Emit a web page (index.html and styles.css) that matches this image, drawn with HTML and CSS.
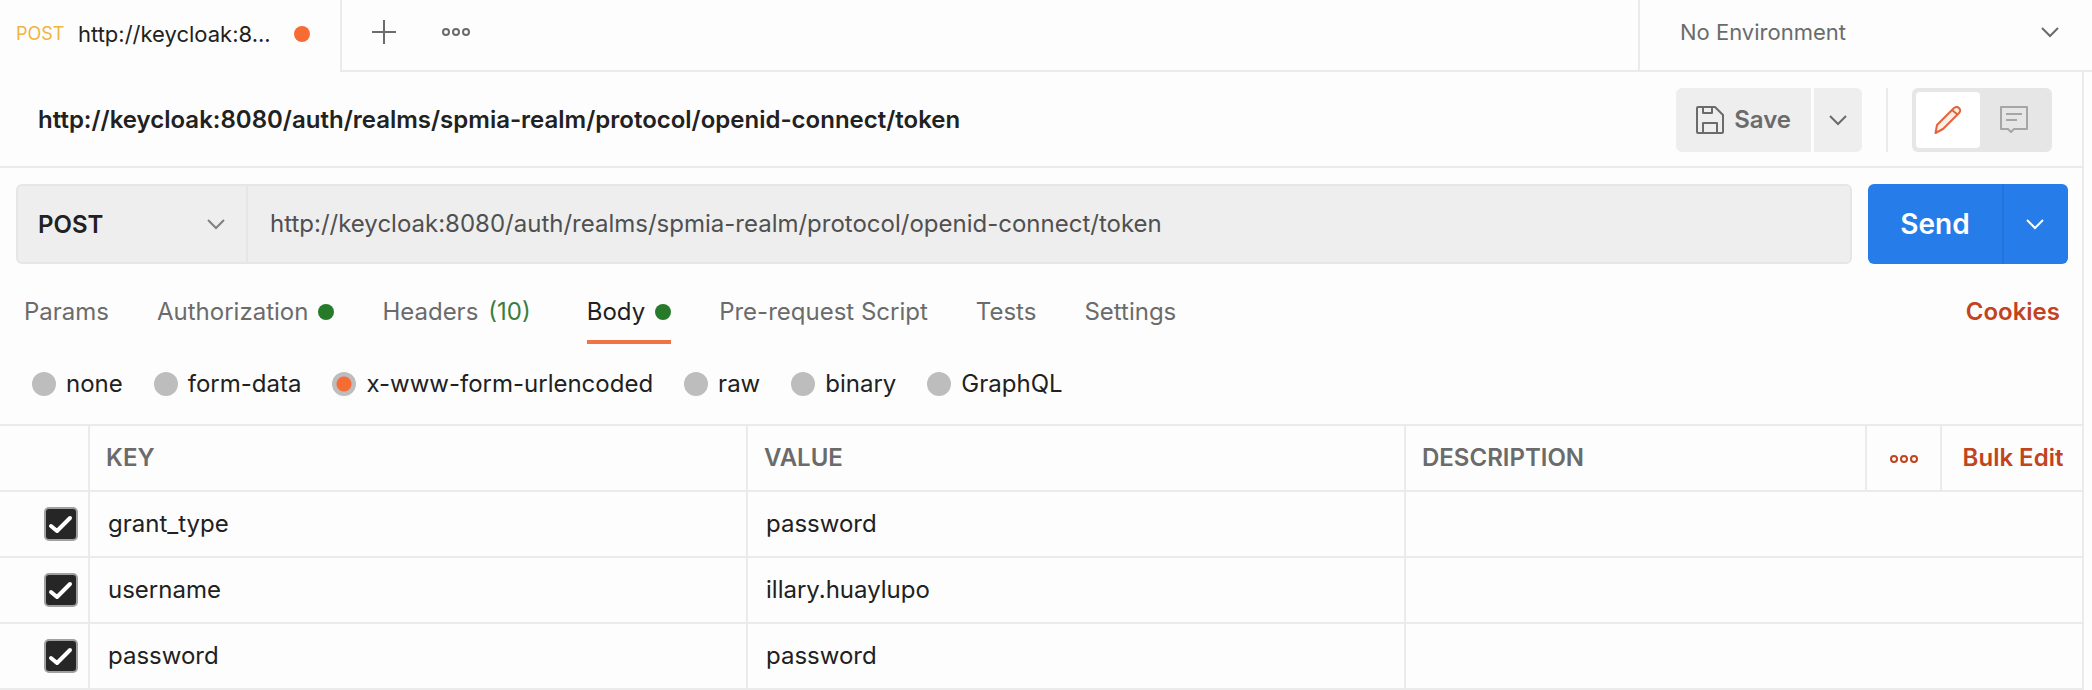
FILE: index.html
```html
<!DOCTYPE html>
<html lang="en">
<head>
<meta charset="utf-8">
<title>http://keycloak:8080/auth/realms/spmia-realm/protocol/openid-connect/token</title>
<link rel="stylesheet" href="styles.css">
</head>
<body>
<header class="topbar">
  <button class="tab" type="button">
    <span class="tab-method">POST</span>
    <span class="tab-title">http://keycloak:8...</span>
    <span class="tab-unsaved"></span>
  </button>
  <div class="tab-actions">
    <button class="icon-button" type="button" aria-label="New tab">
      <svg width="26" height="26" viewBox="0 0 26 26" fill="none" stroke="#6b6b6b" stroke-width="2"><path d="M13 1v24M1 13h24"/></svg>
    </button>
    <button class="icon-button" type="button" aria-label="Tab options">
      <svg width="30" height="10" viewBox="0 0 30 10" fill="none" stroke="#6b6b6b" stroke-width="2"><circle cx="5" cy="5" r="3"/><circle cx="15" cy="5" r="3"/><circle cx="25" cy="5" r="3"/></svg>
    </button>
  </div>
  <div class="select-wrap environment">
    <select class="select environment-select" aria-label="Environment"><option>No Environment</option></select>
    <svg class="chevron" width="20" height="12" viewBox="0 0 20 12" fill="none" stroke="#6b6b6b" stroke-width="2"><path d="M2 2l8 8 8-8"/></svg>
  </div>
</header>

<main class="request">
  <section class="title-row">
    <h1 class="request-title">http://keycloak:8080/auth/realms/spmia-realm/protocol/openid-connect/token</h1>
    <div class="save-group">
      <button class="save" type="button">
        <svg width="28" height="28" viewBox="0 0 28 28" fill="none" stroke="#6b6b6b" stroke-width="2" stroke-linejoin="round"><path d="M2 1h17l8 8v17a1 1 0 0 1-1 1H2a1 1 0 0 1-1-1V2a1 1 0 0 1 1-1z"/><path d="M7 1v6h9V1M7 27V17h14v10"/></svg>
        Save
      </button>
      <button class="save-more" type="button" aria-label="Save options">
        <svg width="20" height="12" viewBox="0 0 20 12" fill="none" stroke="#6b6b6b" stroke-width="2"><path d="M2 2l8 8 8-8"/></svg>
      </button>
    </div>
    <div class="view-toggle">
      <button class="view view-active" type="button" aria-label="Build">
        <svg width="28" height="28" viewBox="0 0 28 28" fill="none" stroke="#e0653f" stroke-width="2" stroke-linejoin="round"><path fill="#fdeee3" d="M20 2c2-1.500 4-1 5 0s2 3 0 5L9 23l-7.500 4L3 19z"/><path d="M18 4l6 5"/></svg>
      </button>
      <button class="view" type="button" aria-label="Comments">
        <svg width="28" height="28" viewBox="0 0 28 28" fill="none" stroke="#a6a6a6" stroke-width="2" stroke-linejoin="round"><path d="M1 1h26v22H14l-3 3-3-3H1z"/><path d="M6 8h16M6 14h11"/></svg>
      </button>
    </div>
  </section>

  <section class="url-row">
    <div class="url-box">
      <div class="select-wrap method">
        <select class="select method-select" aria-label="Method"><option>POST</option></select>
        <svg class="chevron" width="20" height="12" viewBox="0 0 20 12" fill="none" stroke="#808080" stroke-width="2"><path d="M2 2l8 8 8-8"/></svg>
      </div>
      <input class="url-input" type="text" aria-label="Request URL" value="http://keycloak:8080/auth/realms/spmia-realm/protocol/openid-connect/token">
    </div>
    <div class="send-group">
      <button class="send" type="button">Send</button>
      <button class="send-more" type="button" aria-label="Send options">
        <svg width="20" height="12" viewBox="0 0 20 12" fill="none" stroke="#fff" stroke-width="2"><path d="M2 2l8 8 8-8"/></svg>
      </button>
    </div>
  </section>

  <nav class="sections">
    <a class="section-link" href="#params">Params</a>
    <a class="section-link" href="#authorization">Authorization<span class="dot"></span></a>
    <a class="section-link" href="#headers">Headers <span class="count">(10)</span></a>
    <a class="section-link section-current" href="#body">Body<span class="dot"></span></a>
    <a class="section-link" href="#script">Pre-request Script</a>
    <a class="section-link" href="#tests">Tests</a>
    <a class="section-link" href="#settings">Settings</a>
    <a class="accent-link cookies" href="#cookies">Cookies</a>
  </nav>

  <div class="body-types">
    <label class="body-type"><input class="radio" type="radio" name="body">none</label>
    <label class="body-type"><input class="radio" type="radio" name="body">form-data</label>
    <label class="body-type"><input class="radio" type="radio" name="body" checked>x-www-form-urlencoded</label>
    <label class="body-type"><input class="radio" type="radio" name="body">raw</label>
    <label class="body-type"><input class="radio" type="radio" name="body">binary</label>
    <label class="body-type"><input class="radio" type="radio" name="body">GraphQL</label>
  </div>

  <table class="params">
    <colgroup><col class="col-check"><col><col><col class="col-description"><col class="col-more"><col class="col-bulk"></colgroup>
    <thead>
      <tr>
        <th></th>
        <th>KEY</th>
        <th>VALUE</th>
        <th>DESCRIPTION</th>
        <th class="cell-center"><button class="icon-button" type="button" aria-label="Column options"><svg width="30" height="10" viewBox="0 0 30 10" fill="none" stroke="#c1441f" stroke-width="2"><circle cx="5" cy="5" r="3"/><circle cx="15" cy="5" r="3"/><circle cx="25" cy="5" r="3"/></svg></button></th>
        <th class="cell-bulk"><a class="accent-link" href="#bulk">Bulk Edit</a></th>
      </tr>
    </thead>
    <tbody>
      <tr><td class="cell-check"><input class="check" type="checkbox" aria-label="grant_type" checked></td><td>grant_type</td><td>password</td><td colspan="3"></td></tr>
      <tr><td class="cell-check"><input class="check" type="checkbox" aria-label="username" checked></td><td>username</td><td>illary.huaylupo</td><td colspan="3"></td></tr>
      <tr><td class="cell-check"><input class="check" type="checkbox" aria-label="password" checked></td><td>password</td><td>password</td><td colspan="3"></td></tr>
    </tbody>
  </table>
</main>
</body>
</html>
```
FILE: styles.css
```css
* { box-sizing: border-box; }

body {
  margin: 0;
  background: #fdfdfd;
  color: #212121;
  font: 24px/32px Inter, "Liberation Sans", sans-serif;
}

button, select, input {
  margin: 0;
  padding: 0;
  border: 0;
  border-radius: 0;
  background: none;
  color: inherit;
  font: inherit;
}

button { cursor: pointer; }
svg { display: block; flex: none; }
a { text-decoration: none; }

.topbar { display: flex; height: 72px; }

.tab {
  display: flex;
  align-items: center;
  width: 342px;
  padding: 0 30px 4px 16px;
  border-right: 2px solid #ebebeb;
  font-size: 22px;
}
.tab-method { width: 62px; color: #f0b440; font-size: 18px; text-align: left; }
.tab-unsaved {
  width: 16px;
  height: 16px;
  margin-left: auto;
  border-radius: 50%;
  background: #f76c35;
}

.tab-actions {
  display: flex;
  flex: 1;
  align-items: center;
  gap: 44px;
  padding: 0 29px 6px;
  border-bottom: 2px solid #ebebeb;
}

.select-wrap { display: grid; align-items: center; }
.select-wrap > * { grid-area: 1 / 1; }
.select { width: 100%; height: 100%; appearance: none; outline: 0; }
.chevron { justify-self: end; pointer-events: none; }

.environment {
  width: 454px;
  padding: 0 32px 6px 40px;
  border-bottom: 2px solid #ebebeb;
  border-left: 2px solid #ebebeb;
  color: #6b6b6b;
  font-size: 22px;
}

.request { margin-right: 8px; border-right: 2px solid #ebebeb; }

.title-row {
  display: flex;
  align-items: center;
  padding: 16px 30px 14px 38px;
  border-bottom: 2px solid #ebebeb;
}
.request-title { flex: 1; margin: 0; font-size: 24px; font-weight: 600; }

.save-group {
  display: flex;
  gap: 3px;
  height: 64px;
  padding-right: 24px;
  border-right: 2px solid #ebebeb;
  color: #6b6b6b;
  font-weight: 600;
}
.save, .save-more { background: #eeeeee; }
.save {
  display: flex;
  align-items: center;
  gap: 10px;
  padding: 0 20px;
  border-radius: 6px 0 0 6px;
}
.save-more { padding: 0 14px; border-radius: 0 6px 6px 0; }

.view-toggle {
  display: grid;
  grid-template-columns: 64px 64px;
  gap: 4px;
  height: 64px;
  margin-left: 24px;
  padding: 4px;
  border-radius: 6px;
  background: #e6e6e6;
}
.view { display: grid; place-items: center; border-radius: 4px; }
.view:last-child { padding-right: 4px; }
.view-active { background: #fff; }

.url-row { display: flex; gap: 16px; height: 96px; padding: 16px 14px 0 16px; }
.url-box {
  display: flex;
  flex: 1;
  border: 2px solid #e6e6e6;
  border-radius: 6px;
  background: #eeeeee;
}
.method {
  width: 230px;
  padding: 0 20px;
  border-right: 2px solid #e6e6e6;
  font-weight: 600;
}
.method-select { padding-top: 2px; }
.url-input { flex: 1; padding: 0 22px 1px; color: #505050; outline: 0; }

.send-group { display: flex; border-radius: 6px; background: #267ce8; color: #fff; }
.send { width: 134px; font-size: 28px; font-weight: 600; }
.send-more {
  display: grid;
  place-items: center;
  width: 66px;
  padding-right: 2px;
  border-left: 2px solid #2274dc;
}

.sections { display: flex; align-items: flex-start; gap: 48px; padding: 32px 22px 0 24px; }
.section-link {
  display: flex;
  align-items: center;
  gap: 10px;
  padding-bottom: 12px;
  border-bottom: 4px solid transparent;
  color: #6b6b6b;
}
.section-current { border-color: #f07443; color: #212121; }
.dot { width: 16px; height: 16px; border-radius: 50%; background: #277a2a; }
.count { margin-right: 8px; color: #3b7d3e; }
.accent-link { color: #c1441f; font-weight: 600; }
.cookies { margin-left: auto; }

.body-types { display: flex; gap: 31px; padding: 24px 32px; }
.body-type { display: flex; align-items: center; gap: 10px; }
.radio {
  width: 24px;
  height: 24px;
  border-radius: 50%;
  background: #bdbdbd;
  appearance: none;
}
.radio:checked { background: radial-gradient(circle, #f76c35 7px, #bdbdbd 8px); }

.params { width: 100%; border-collapse: collapse; table-layout: fixed; }
.col-check { width: 89px; }
.col-description { width: 461px; }
.col-more { width: 75px; }
.col-bulk { width: 141px; }
.params th, .params td {
  height: 66px;
  padding: 0 18px;
  border: 2px solid #ebebeb;
  text-align: left;
}
.params th { padding: 0 16px; color: #6b6b6b; font-weight: 600; }
.params tr > :first-child { border-left: 0; }
.params tr > :last-child { border-right: 0; }
.params .cell-center, .params .cell-bulk { padding: 0; text-align: center; }
.params .cell-bulk { padding-left: 2px; }
.params .cell-center .icon-button { display: inline-block; vertical-align: middle; }
.params .cell-check { padding: 0 10px; text-align: right; }
.check {
  width: 34px;
  height: 34px;
  border: 2px solid #a0a0a0;
  border-radius: 5px;
  background: #262626 url("data:image/svg+xml,%3Csvg xmlns='http://www.w3.org/2000/svg' viewBox='0 0 30 30' fill='none' stroke='white' stroke-width='4' stroke-linecap='round' stroke-linejoin='round'%3E%3Cpath d='M5 17l6 5L24 9'/%3E%3C/svg%3E") center / 30px 30px no-repeat;
  appearance: none;
  vertical-align: middle;
}
```
